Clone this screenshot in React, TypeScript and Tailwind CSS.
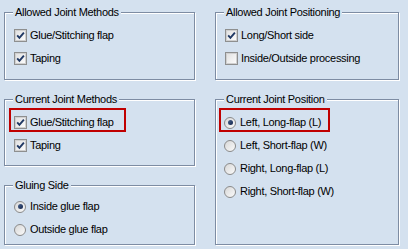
import { FC, ReactNode } from 'react';

type GroupProps = {
  title: string;
  className: string;
  children: ReactNode;
};

const GroupBox: FC<GroupProps> = ({ title, className, children }) => (
  <div
    className={`relative border border-[#7d8ca3] shadow-[1px_1px_0_#ffffff,inset_1px_1px_0_#ffffff] ${className}`}
  >
    <span className="absolute -top-[7px] left-[8px] bg-[#d4e1ef] px-[2px] leading-[13px]">
      {title}
    </span>
    {children}
  </div>
);

const CheckBox: FC<{ checked: boolean }> = ({ checked }) => (
  <span className="relative flex h-[13px] w-[13px] shrink-0 items-center justify-center border border-[#8e8f8f] bg-white">
    <span className="h-[11px] w-[11px] border border-[#d0d0d0] bg-gradient-to-br from-[#e2e2e2] to-[#fbfbfb]" />
    {checked && (
      <svg
        className="absolute left-0 top-0"
        width="11"
        height="11"
        viewBox="0 0 11 11"
      >
        <path
          d="M2.2 5.4 L4.4 7.8 L8.9 2.6"
          fill="none"
          stroke="#1f3864"
          strokeWidth="1.9"
        />
      </svg>
    )}
  </span>
);

const Radio: FC<{ checked: boolean }> = ({ checked }) => (
  <span className="flex h-[12px] w-[12px] shrink-0 items-center justify-center rounded-full border border-[#8a8a8a] bg-gradient-to-br from-[#d8d8d8] to-[#fafafa]">
    {checked && (
      <span className="h-[5px] w-[5px] rounded-full bg-gradient-to-br from-[#4a6590] to-[#13234a]" />
    )}
  </span>
);

const CheckRow: FC<{ label: string; checked: boolean }> = ({ label, checked }) => (
  <div className="flex h-[23px] items-center gap-[3px]">
    <CheckBox checked={checked} />
    <span>{label}</span>
  </div>
);

const RadioRow: FC<{ label: string; checked: boolean }> = ({ label, checked }) => (
  <div className="flex h-[23px] items-center gap-[4px]">
    <Radio checked={checked} />
    <span>{label}</span>
  </div>
);

const App: FC = () => {
  return (
    <div className="flex h-[249px] w-[408px] gap-[20px] bg-[#d4e1ef] pl-[4px] pt-[12px] font-['Liberation_Sans',Arial,sans-serif] text-[11px] tracking-[-0.3px] text-black">
      <div className="flex w-[191px] flex-col gap-[19px]">
        <GroupBox title="Allowed Joint Methods" className="h-[68px] pl-[9px] pt-[11px]">
          <CheckRow label="Glue/Stitching flap" checked />
          <CheckRow label="Taping" checked />
        </GroupBox>
        <GroupBox title="Current Joint Methods" className="h-[67px] pl-[9px] pt-[11px]">
          <div className="absolute left-[4px] top-[8px] h-[24px] w-[117px] border-2 border-[#c00000]" />
          <CheckRow label="Glue/Stitching flap" checked />
          <CheckRow label="Taping" checked />
        </GroupBox>
        <GroupBox title="Gluing Side" className="h-[60px] pl-[9px] pt-[9px]">
          <RadioRow label="Inside glue flap" checked />
          <RadioRow label="Outside glue flap" checked={false} />
        </GroupBox>
      </div>
      <div className="flex w-[184px] flex-col gap-[19px]">
        <GroupBox title="Allowed Joint Positioning" className="h-[68px] pl-[9px] pt-[11px]">
          <CheckRow label="Long/Short side" checked />
          <CheckRow label="Inside/Outside processing" checked={false} />
        </GroupBox>
        <GroupBox title="Current Joint Position" className="h-[146px] pl-[8px] pt-[11px]">
          <div className="absolute left-[3px] top-[8px] h-[24px] w-[111px] border-2 border-[#c00000]" />
          <RadioRow label="Left, Long-flap (L)" checked />
          <RadioRow label="Left, Short-flap (W)" checked={false} />
          <RadioRow label="Right, Long-flap (L)" checked={false} />
          <RadioRow label="Right, Short-flap (W)" checked={false} />
        </GroupBox>
      </div>
    </div>
  );
};

export default App;
